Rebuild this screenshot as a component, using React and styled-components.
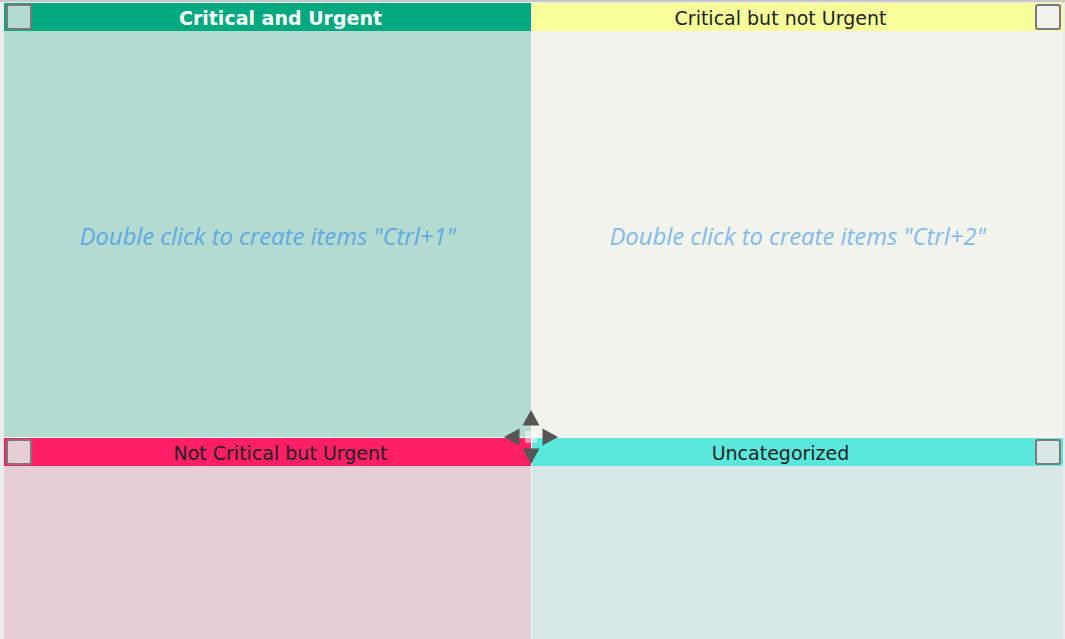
import React from "react";
import styled, { createGlobalStyle } from "styled-components";

const GlobalStyle = createGlobalStyle`
    html, body {
        margin: 0;
        padding: 0;
        height: 100%;
        overflow: hidden;
    }
    #root {
        height: 100%;
    }
`;

const quadrants = [
    { title: "Critical and Urgent", head: "#00a97e", body: "#b4dbd0", text: "#ffffff", bold: true, box: "left", hint: "Double click to create items \"Ctrl+1\"", hintColor: "#5ea9e6" },
    { title: "Critical but not Urgent", head: "#f8fe9a", body: "#f2f3ea", text: "#222222", box: "right", hint: "Double click to create items \"Ctrl+2\"", hintColor: "#7fbaf0" },
    { title: "Not Critical but Urgent", head: "#ff1f66", body: "#e7cdd5", text: "#222222", box: "left" },
    { title: "Uncategorized", head: "#5ae8dd", body: "#d7e8e6", text: "#222222", box: "right" },
];

const App = () => {
    return (
        <>
            <GlobalStyle />
            <StyledWindow>
                <StyledGrid>
                    {quadrants.map((q) => (
                        <StyledQuadrant key={q.title} $bg={q.body}>
                            <StyledHeader $bg={q.head} $color={q.text} $bold={q.bold} $side={q.box}>
                                <StyledCheck $bg={q.body} />
                                <StyledTitle $side={q.box}>{q.title}</StyledTitle>
                            </StyledHeader>
                            <StyledBody>
                                {q.hint && <StyledHint $color={q.hintColor}>{q.hint}</StyledHint>}
                            </StyledBody>
                        </StyledQuadrant>
                    ))}
                    <StyledMover viewBox="0 0 54 54" width="54" height="54">
                        <rect x="21" y="21" width="12" height="12" fill="#ffffff" opacity="0.5" />
                        <polygon points="27,0 18.5,15.5 35.5,15.5" fill="#555555" />
                        <polygon points="27,54 18.5,38.5 35.5,38.5" fill="#555555" />
                        <polygon points="0,27 15.5,18.5 15.5,35.5" fill="#555555" />
                        <polygon points="54,27 38.5,18.5 38.5,35.5" fill="#555555" />
                    </StyledMover>
                </StyledGrid>
            </StyledWindow>
        </>
    );
};

const StyledWindow = styled.div`
    height: 100%;
    box-sizing: border-box;
    background: #ececec;
    border-top: 2px solid #c8c8c8;
    padding: 1px 2px 0 4px;
`;

const StyledGrid = styled.div`
    position: relative;
    height: 100%;
    display: grid;
    grid-template-columns: 527px 1fr;
    grid-template-rows: 434px 1fr;
    gap: 1px;
    background: #f6f6f6;
`;

const StyledQuadrant = styled.div`
    display: flex;
    flex-direction: column;
    background: ${(p) => p.$bg};
    min-height: 0;
`;

const StyledHeader = styled.div`
    height: 28px;
    flex-shrink: 0;
    display: flex;
    flex-direction: ${(p) => (p.$side === "left" ? "row" : "row-reverse")};
    align-items: center;
    padding: 0 2px;
    background: ${(p) => p.$bg};
    color: ${(p) => p.$color};
    font-family: "DejaVu Sans", "Liberation Sans", sans-serif;
    font-size: 19px;
    font-weight: ${(p) => (p.$bold ? 700 : 400)};
`;

const StyledCheck = styled.div`
    flex-shrink: 0;
    width: 22px;
    height: 22px;
    border: 2px solid #7a7a7a;
    border-radius: 3px;
    background: ${(p) => p.$bg};
`;

const StyledTitle = styled.span`
    flex: 1;
    text-align: center;
    white-space: nowrap;
    padding-top: 1px;
    ${(p) => (p.$side === "right" ? "padding-right: 8px;" : "")}
`;

const StyledBody = styled.div`
    flex: 1;
    display: flex;
    align-items: center;
    justify-content: center;
`;

const StyledHint = styled.div`
    font-family: "Open Sans", "Noto Sans", sans-serif;
    font-style: italic;
    font-size: 23.8px;
    color: ${(p) => p.$color};
    margin-top: 4px;
`;

const StyledMover = styled.svg`
    position: absolute;
    left: 500px;
    top: 407px;
`;

export default App;
